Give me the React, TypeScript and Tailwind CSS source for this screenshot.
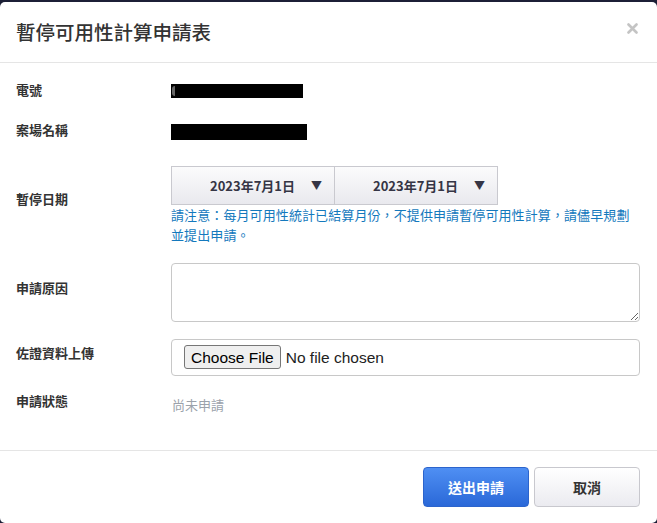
import { useState } from "react";

const cjk = { fontFamily: '"Noto Sans CJK TC", "Liberation Sans", sans-serif' };

function DateSelect({ value }: { value: string }) {
  return (
    <div className="flex h-[39px] w-[164px] items-center justify-end gap-[16px] border border-[#c9c9cf] bg-gradient-to-b from-[#fbfbfc] to-[#e9e9ee] pr-[12px] text-[13px] font-bold text-[#353545]">
      <span>{value}</span>
      <span className="text-[11px] leading-none">▼</span>
    </div>
  );
}

function Row({ label, labelPad, children }: { label: string; labelPad: string; children: React.ReactNode }) {
  return (
    <div className="flex">
      <div className={`w-[155px] shrink-0 text-[13px] font-bold leading-[20px] text-[#333] ${labelPad}`}>{label}</div>
      <div className="flex-1">{children}</div>
    </div>
  );
}

function App() {
  const [reason, setReason] = useState("");

  return (
    <div className="h-[523px] w-[657px] overflow-hidden bg-[#1c1f36] pt-[2px]" style={cjk}>
      <div className="flex h-[521px] flex-col rounded-[5px] bg-white">
        <header className="flex h-[61px] items-center justify-between border-b border-[#e5e5e5] pl-[16px] pr-[19px]">
          <h1 className="text-[19.5px] font-medium text-[#333]">暫停可用性計算申請表</h1>
          <svg width="11" height="11" viewBox="0 0 11 11" className="mb-[8px]">
            <path d="M1.5 1.5 L9.5 9.5 M9.5 1.5 L1.5 9.5" stroke="#c4c4c4" strokeWidth="2.6" strokeLinecap="round" />
          </svg>
        </header>

        <main className="flex flex-1 flex-col pl-[16px] pr-[17px] pt-[17px]">
          <Row label="電號" labelPad="">
            <div className="mt-[4px] flex h-[14px] w-[132px] items-center bg-black pl-[1px]">
              <span className="h-[10px] w-[3px] rounded-l-full bg-[#666]" />
            </div>
          </Row>

          <div className="mt-[20px]">
            <Row label="案場名稱" labelPad="">
              <div className="mt-[4px] h-[16px] w-[136px] bg-black" />
            </Row>
          </div>

          <div className="mt-[26px]">
            <Row label="暫停日期" labelPad="pt-[23px]">
              <div className="flex">
                <DateSelect value="2023年7月1日" />
                <div className="-ml-px">
                  <DateSelect value="2023年7月1日" />
                </div>
              </div>
              <p className="text-[13px] leading-[20px] tracking-[0.1px] text-[#1479bd]">
                請注意：每月可用性統計已結算月份，不提供申請暫停可用性計算，請儘早規劃
                <br />
                並提出申請。
              </p>
            </Row>
          </div>

          <div className="mt-[18px]">
            <Row label="申請原因" labelPad="pt-[15px]">
              <textarea
                value={reason}
                onChange={(e) => setReason(e.target.value)}
                className="block h-[59px] w-full rounded-[4px] border border-[#c8c8c8] px-3 py-2 text-[13px] outline-none"
              />
            </Row>
          </div>

          <div className="mt-[17px]">
            <Row label="佐證資料上傳" labelPad="pt-[4px]">
              <div className="flex h-[37px] items-center rounded-[4px] border border-[#c8c8c8] pl-[12px]">
                <input
                  type="file"
                  className="text-[15.5px] text-[#222] file:mr-[5px] file:h-[24px] file:rounded-[3px] file:border file:border-solid file:border-[#767676] file:bg-[#efefef] file:px-[6px] file:text-[15.5px] file:text-black"
                  style={{ fontFamily: '"Liberation Sans", sans-serif' }}
                />
              </div>
            </Row>
          </div>

          <div className="mt-[15px]">
            <Row label="申請狀態" labelPad="">
              <div className="pl-[1px] pt-[4px] text-[13px] leading-[20px] text-[#9ba2ab]">尚未申請</div>
            </Row>
          </div>
        </main>

        <footer className="flex h-[73px] items-start justify-end gap-[5px] border-t border-[#e5e5e5] pr-[17px] pt-[16px]">
          <button className="h-[40px] w-[106px] rounded-[4px] border border-[#2c64cc] bg-gradient-to-b from-[#4f8ff3] to-[#2a68d8] text-[14px] font-bold text-white">
            送出申請
          </button>
          <button className="h-[40px] w-[106px] rounded-[4px] border border-[#c8c8ce] bg-gradient-to-b from-white to-[#ebebf0] text-[14px] font-bold text-[#333]">
            取消
          </button>
        </footer>
      </div>
    </div>
  );
}

export default App;
